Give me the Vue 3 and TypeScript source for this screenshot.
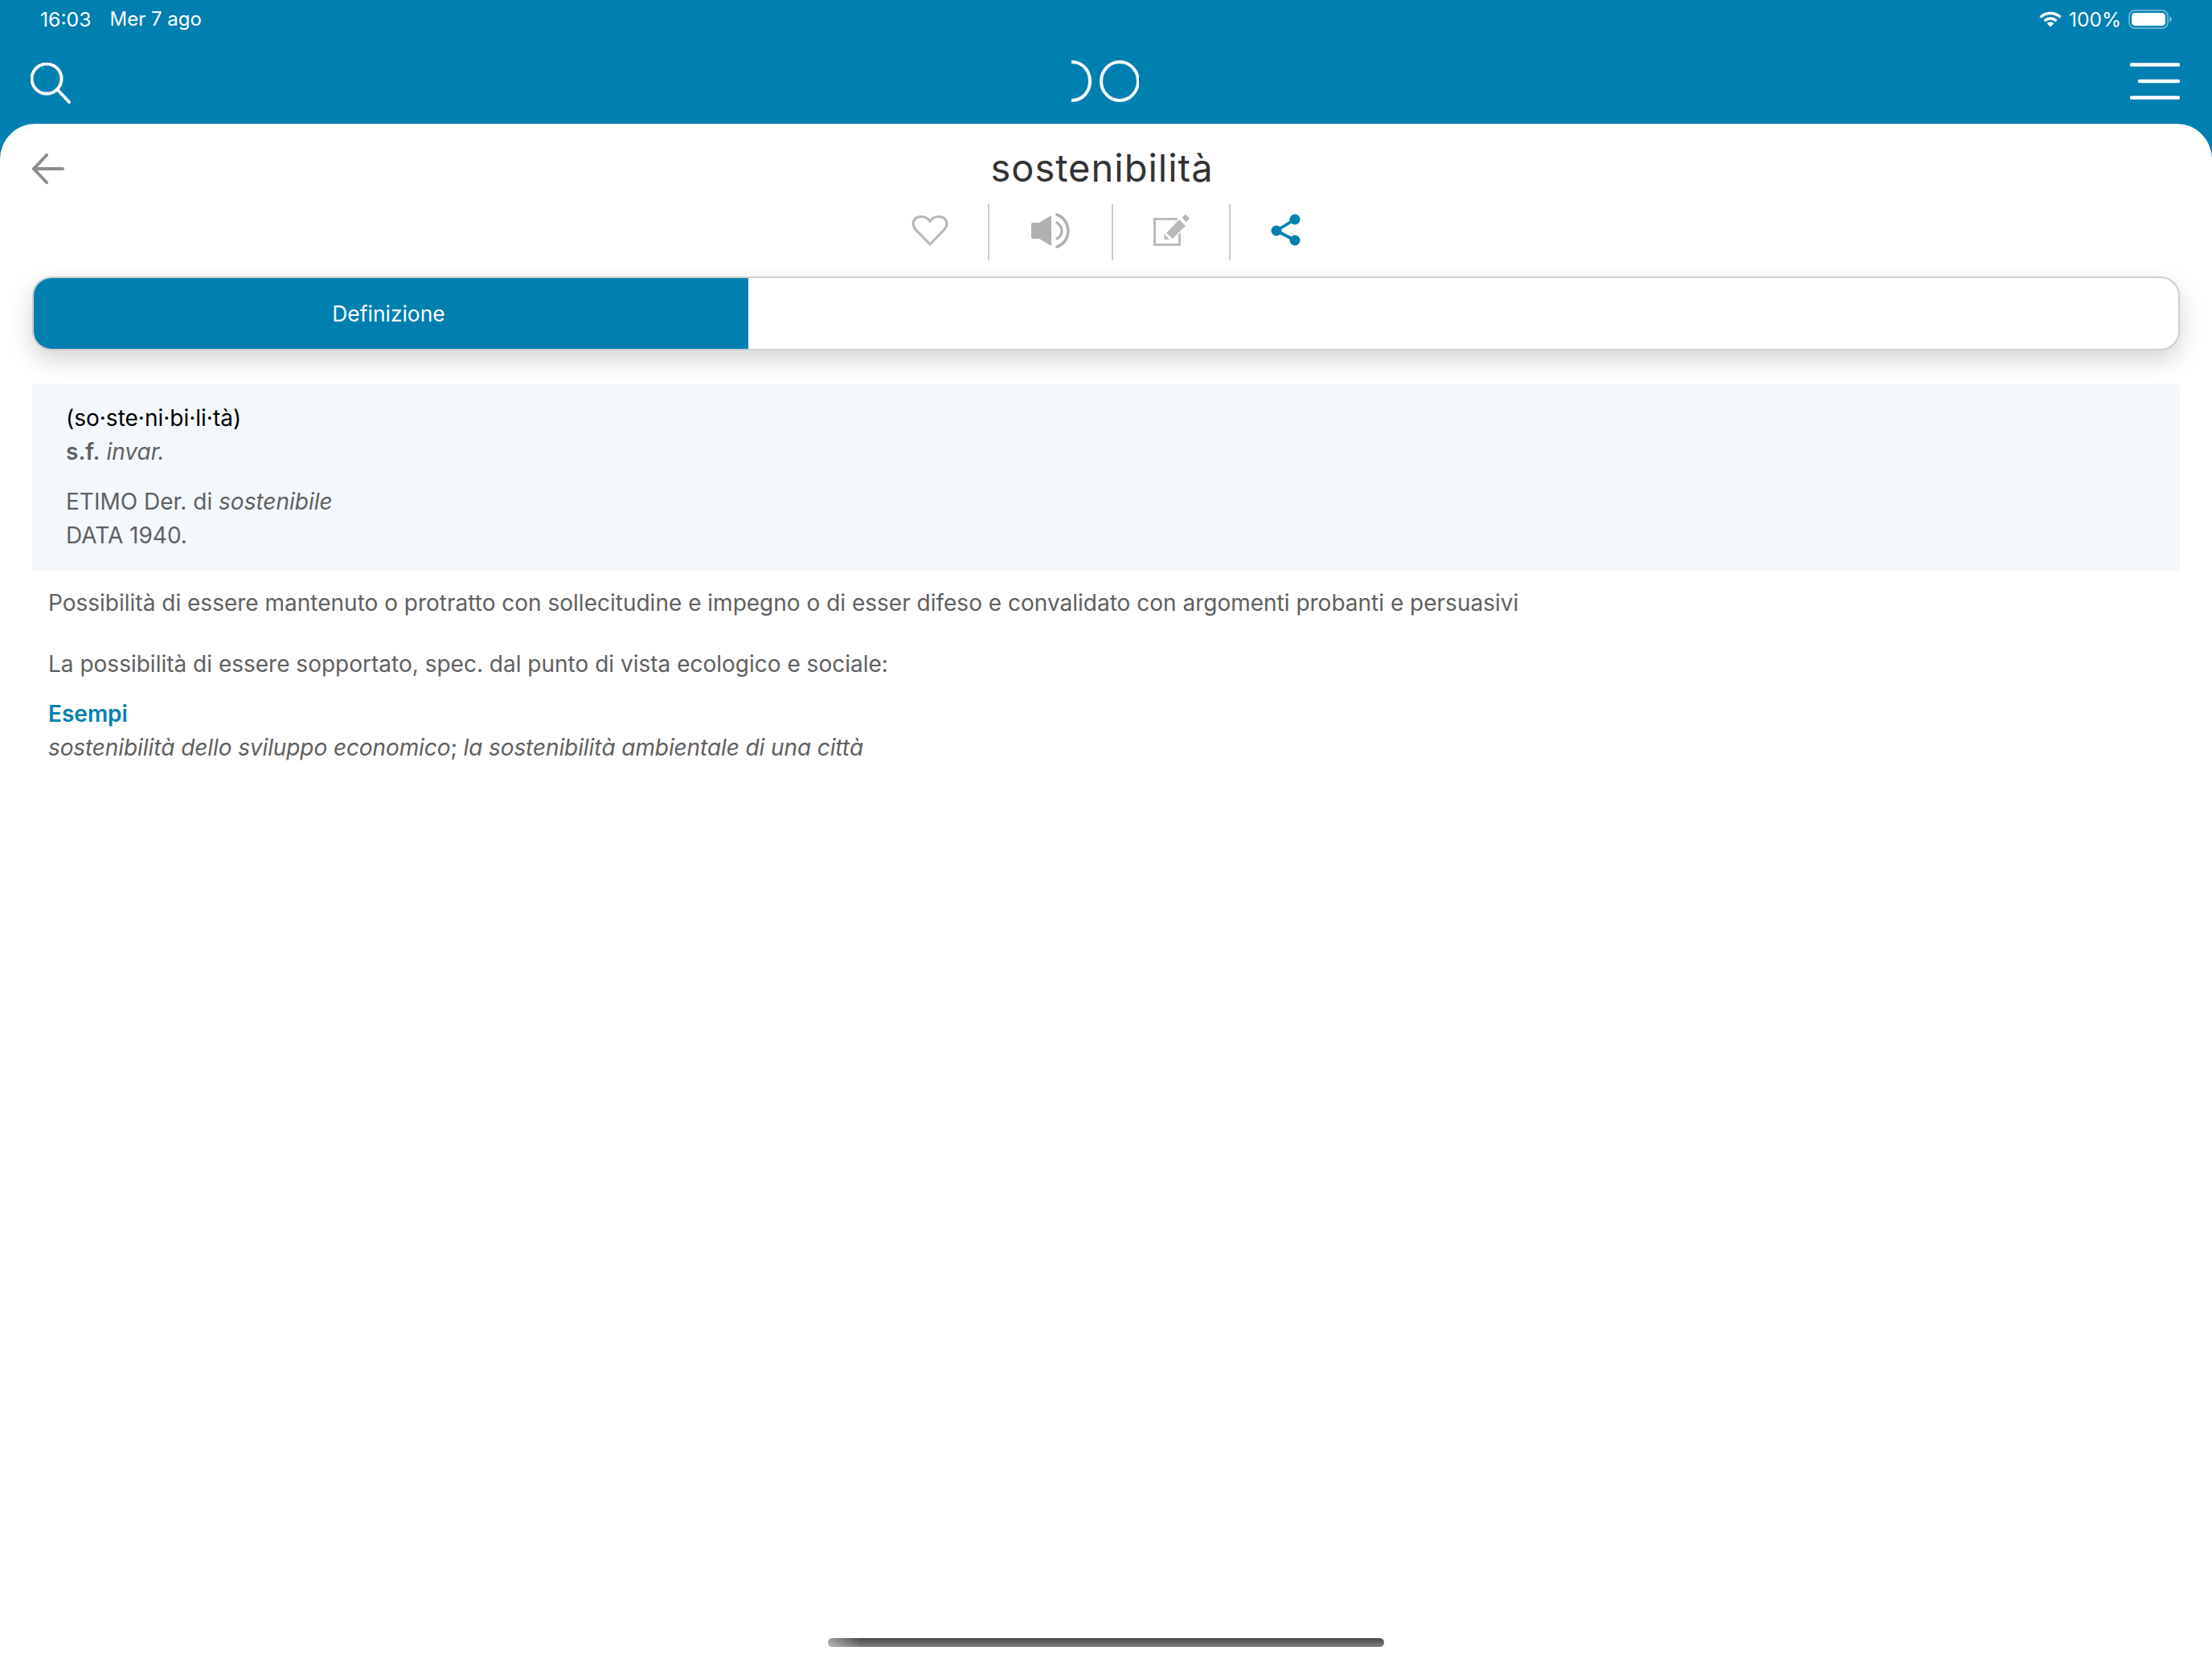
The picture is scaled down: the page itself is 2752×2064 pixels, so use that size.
<script setup lang="ts">
const title: string = 'sostenibilità'
</script>

<template>
  <div class="page">
    <header class="head">
      <div class="status">
        <div class="status-left">
          <span class="time">16:03</span>
          <span>Mer 7 ago</span>
        </div>
        <div class="status-right">
          <svg width="28" height="20" viewBox="0 0 28 20" fill="none" stroke="#fff">
            <path d="M1.500 7.500C8.500 .8 19.500 .8 26.500 7.500" stroke-width="3.400" />
            <path d="M6.500 12C11 8 17 8 21.500 12" stroke-width="3.400" />
            <path d="M9.600 15.200C12.200 12.900 15.800 12.900 18.400 15.200L14 19.600Z" fill="#fff" stroke="none" />
          </svg>
          <span class="pct">100%</span>
          <svg width="54" height="24" viewBox="0 0 54 24" fill="none">
            <rect x="1" y="1" width="48" height="22" rx="7" stroke="#fff" stroke-opacity=".4" stroke-width="2" />
            <rect x="4" y="4" width="42" height="16" rx="4.500" fill="#fff" />
            <path d="M51 8.500c2 .6 3 2 3 3.500s-1 2.900-3 3.500Z" fill="#fff" fill-opacity=".45" />
          </svg>
        </div>
      </div>
      <nav class="nav">
        <svg class="search" width="50" height="52" viewBox="0 0 50 52" fill="none" stroke="#fff" stroke-linecap="round">
          <circle cx="20" cy="20" r="18.500" stroke-width="4" />
          <path d="M33.500 33.500L48 49" stroke-width="4" />
        </svg>
        <svg class="logo" width="84" height="52" viewBox="0 0 84 52" fill="none" stroke="#fff" stroke-width="4">
          <path d="M0 2C14 2 23 13 23 26S14 50 0 50" />
          <ellipse cx="60" cy="26" rx="23" ry="24" />
        </svg>
        <svg class="menu" width="62" height="46" viewBox="0 0 62 46" fill="none" stroke="#fff" stroke-width="4.500" stroke-linecap="round">
          <path d="M2 2.500H60" />
          <path d="M12 23H60" />
          <path d="M2 43.500H60" />
        </svg>
      </nav>
    </header>

    <main class="sheet">
      <div class="title-row">
        <svg class="back" width="40" height="38" viewBox="0 0 40 38" fill="none" stroke="#8c8c8c" stroke-width="4" stroke-linecap="round" stroke-linejoin="round">
          <path d="M18 2L2 19L18 36" />
          <path d="M2 19H38" />
        </svg>
        <h1 class="title">{{ title }}</h1>
      </div>

      <div class="tools">
        <div class="tool t1">
          <svg width="46" height="40" viewBox="0 0 46 40" fill="none" stroke="#b7b7b7" stroke-width="3.200" stroke-linejoin="round">
            <path d="M23 37L5 18.500C-1 11 3 2.500 12 2.500C17 2.500 21 5 23 8.500C25 5 29 2.500 34 2.500C43 2.500 47 11 41 18.500Z" />
          </svg>
        </div>
        <div class="tool t2">
          <svg width="50" height="44" viewBox="0 0 50 44" fill="none" stroke="#b0b0b0" stroke-linecap="round">
            <path d="M3 12H11L25 3.500Q26 3 26 4.500V39.500Q26 41 25 40.500L11 32H3A2 2 0 0 1 1 30V14A2 2 0 0 1 3 12Z" fill="#b0b0b0" stroke="none" />
            <path d="M33 12C41 18 41 27 33 32" stroke-width="3.200" />
            <path d="M33 2C51 9 52 35 33 42" stroke-width="3.500" />
          </svg>
        </div>
        <div class="tool t3">
          <svg width="46" height="42" viewBox="0 0 46 42" fill="none">
            <path d="M31 6.500H2.500V38.500H33.500V15" stroke="#bbb" stroke-width="3.200" />
            <path d="M16 24L33 6L42 15L25 32Z" fill="#b9b9b9" stroke="#fff" stroke-width="1.500" />
            <path d="M14.500 25L21 32L14.500 32Z" fill="#b9b9b9" />
            <path d="M36.500 4.500L41 .5L46 6L41.500 10.500Z" fill="#b9b9b9" />
          </svg>
        </div>
        <div class="tool t4">
          <svg width="38" height="42" viewBox="0 0 38 42" fill="#007fb1" stroke="#007fb1">
            <path d="M31 7L8 21L31 33" fill="none" stroke-width="3.800" />
            <circle cx="31" cy="7" r="6.500" stroke="none" />
            <circle cx="8" cy="21" r="6.500" stroke="none" />
            <circle cx="31" cy="33" r="6.500" stroke="none" />
          </svg>
        </div>
      </div>

      <div class="tabs">
        <div class="tab-active">Definizione</div>
      </div>

      <section class="info">
        <p class="syll">(so·ste·ni·bi·li·tà)</p>
        <p><b>s.f.</b> <i>invar.</i></p>
        <p class="gap">ETIMO Der. di <i>sostenibile</i></p>
        <p>DATA 1940.</p>
      </section>

      <section class="body">
        <p>Possibilità di essere mantenuto o protratto con sollecitudine e impegno o di esser difeso e convalidato con argomenti probanti e persuasivi</p>
        <p class="second">La possibilità di essere sopportato, spec. dal punto di vista ecologico e sociale:</p>
        <p class="ex-label">Esempi</p>
        <p class="example"><i>sostenibilità dello sviluppo economico</i>; <i>la sostenibilità ambientale di una città</i></p>
      </section>

      <div class="home"></div>
    </main>
  </div>
</template>

<style>
html, body { margin: 0; background: #fff; }
</style>

<style scoped>
.page {
  width: 2752px;
  height: 2064px;
  display: flex;
  flex-direction: column;
  background: #007fb1;
  font-family: Inter, "Noto Sans", sans-serif;
  overflow: hidden;
}
.head { color: #fff; height: 154px; flex: none; }
.status {
  height: 48px;
  display: flex;
  justify-content: space-between;
  align-items: center;
  padding: 0 50px 0 50px;
  font-size: 24px;
}
.status-left { display: flex; gap: 23px; }
.time { font-size: 24.800px; }
.status-right { display: flex; align-items: center; }
.pct { margin: 0 9px 0 9px; font-size: 24.500px; }
.nav {
  height: 106px;
  display: grid;
  grid-template-columns: 1fr auto 1fr;
  align-items: center;
  padding: 0 40px 0 38px;
}
.search { margin-top: 6px; }
.menu { justify-self: end; }
.sheet {
  flex: 1;
  display: flex;
  flex-direction: column;
  background: #fff;
  border-radius: 44px 44px 0 0;
}
.title-row {
  display: flex;
  align-items: center;
  height: 56px;
  margin-top: 27px;
  padding: 0 90px 0 40px;
}
.back { margin-top: 2px; }
.title {
  flex: 1;
  margin: 0;
  text-align: center;
  font-size: 47px;
  font-weight: 400;
  line-height: 56px;
  letter-spacing: 1px;
  color: #333;
}
.tools {
  display: flex;
  justify-content: center;
  margin-top: 17px;
  height: 70px;
}
.tool {
  box-sizing: content-box;
  display: flex;
  align-items: center;
  justify-content: center;
  height: 66px;
  padding-bottom: 4px;
  border-right: 2px solid #ccc;
}
.t1 { width: 144px; }
.t2 { width: 152px; }
.t3 { width: 144px; }
.t4 { width: 136px; border-right: 0; }
.tabs {
  margin: 20px 40px 0;
  height: 92px;
  box-sizing: border-box;
  border: 2px solid #cfcfcf;
  border-radius: 24px;
  background: #fff;
  box-shadow: 0 12px 30px rgba(0, 0, 0, .17);
  overflow: hidden;
  display: flex;
}
.tab-active {
  width: 889px;
  box-sizing: border-box;
  padding-right: 6px;
  background: #007fb1;
  color: #fff;
  font-size: 26.400px;
  display: flex;
  align-items: center;
  justify-content: center;
}
.info {
  margin: 42px 40px 0;
  padding: 21px 42px 23px;
  background: #f3f8fc;
  color: #606060;
}
b { font-weight: 600; }
p {
  margin: 0;
  font-size: 28px;
  line-height: 42px;
}
.syll { color: #000; }
.gap { margin-top: 20px; }
.body { padding: 19px 60px 0; color: #606060; }
.second { margin-top: 34px; }
.ex-label { margin-top: 20px; color: #007fb1; font-weight: 600; }
.example { letter-spacing: -.1px; }
.home {
  width: 692px;
  height: 11px;
  margin: auto auto 15px;
  border-radius: 6px;
  background:
    linear-gradient(90deg, rgba(255, 255, 255, .45), rgba(255, 255, 255, 0) 6%),
    linear-gradient(#474747, #7f7f7f);
}
</style>
